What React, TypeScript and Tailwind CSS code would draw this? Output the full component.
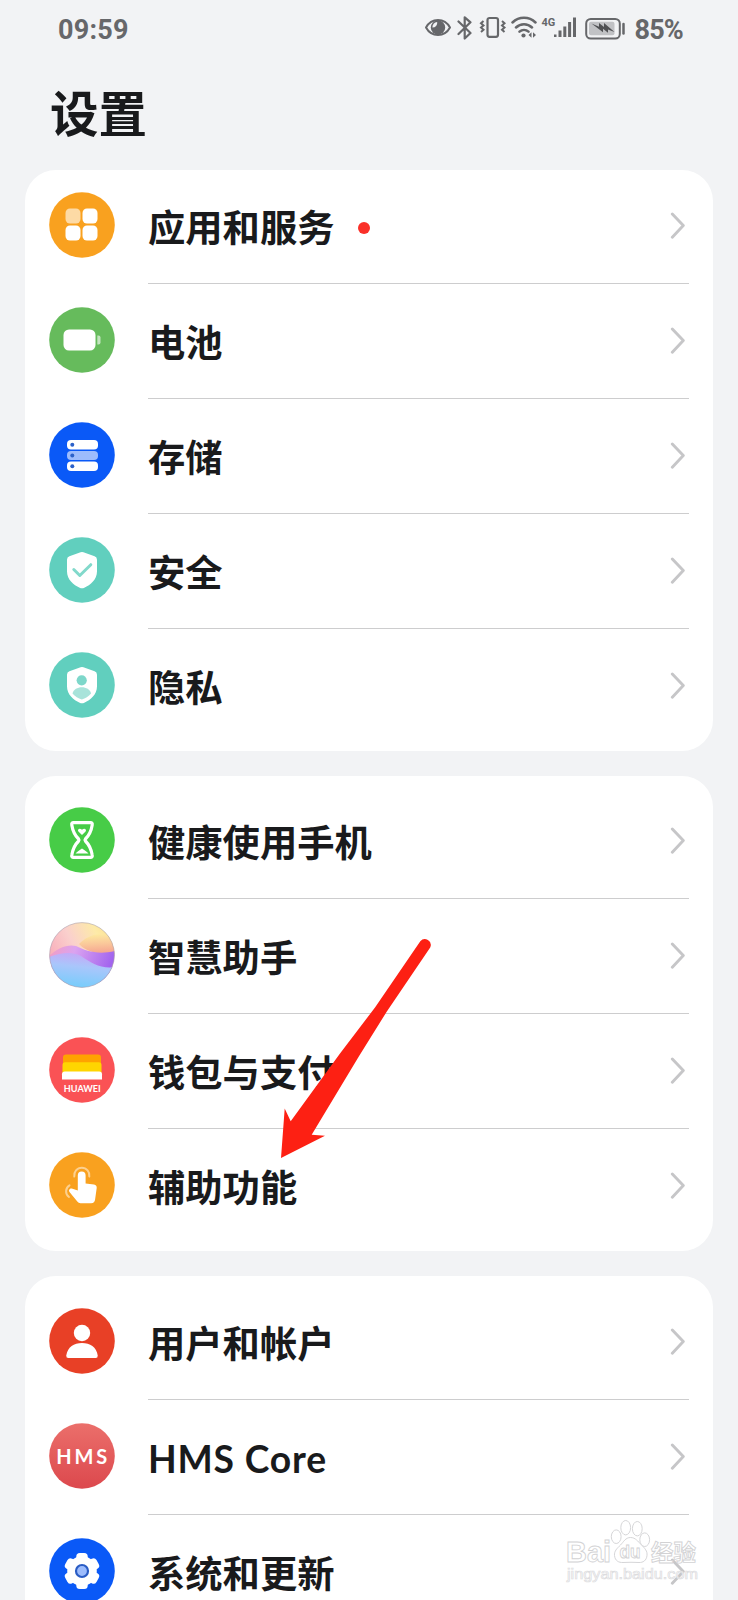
import React from "react";

type Item = {
  label: string;
  icon: React.FC;
  dot?: boolean;
  latin?: boolean;
};

const Badge: React.FC<{ color: string; children: React.ReactNode }> = ({ color, children }) => (
  <svg width="66" height="66" viewBox="0 0 66 66" className="block shrink-0">
    <circle cx="33" cy="33" r="32.8" fill={color} />
    {children}
  </svg>
);

const AppsIcon = () => (
  <Badge color="#f9a11f">
    <rect x="16.5" y="16.5" width="15" height="15" rx="4.5" fill="#fddaa5" />
    <rect x="33.5" y="16.5" width="15" height="15" rx="4.5" fill="#fff" />
    <rect x="16.5" y="33.5" width="15" height="15" rx="4.5" fill="#fff" />
    <rect x="33.5" y="33.5" width="15" height="15" rx="4.5" fill="#fff" />
  </Badge>
);

const BatteryIcon = () => (
  <Badge color="#66bb5c">
    <rect x="14.5" y="22.5" width="32" height="21" rx="5.5" fill="#fff" />
    <path d="M48.3 28.5h1.2q2 0 2 2v5q0 2-2 2h-1.2z" fill="#c2e4be" />
  </Badge>
);

const StorageIcon = () => (
  <Badge color="#0a59f7">
    <rect x="18" y="18" width="31" height="9.5" rx="4" fill="#fff" />
    <rect x="18" y="29" width="31" height="9" rx="4" fill="#9dbcfc" />
    <rect x="18" y="39.5" width="31" height="9.5" rx="4" fill="#fff" />
    <circle cx="23.3" cy="22.8" r="2" fill="#2b61c9" />
    <circle cx="23.3" cy="33.5" r="2" fill="#2b61c9" />
    <circle cx="23.3" cy="44.2" r="2" fill="#2b61c9" />
  </Badge>
);

const SHIELD =
  "M31.6 15.2q1.4-.6 2.8 0l11.2 4.1q2.400.9 2.400 3.400v11.500c0 8.500-6.500 13.500-12.700 16.600q-2.300 1.100-4.600 0C24.500 47.700 18 42.700 18 34.200V22.700q0-2.500 2.400-3.400z";

const SecurityIcon = () => (
  <Badge color="#61cfbe">
    <path d={SHIELD} fill="#fff" />
    <path d="M24.8 32.5l6 6 11-10.8" fill="none" stroke="#82d9cb" strokeWidth="3" strokeLinecap="round" strokeLinejoin="round" />
  </Badge>
);

const PrivacyIcon = () => (
  <Badge color="#61cfbe">
    <path d={SHIELD} fill="#fff" />
    <circle cx="32.7" cy="28.3" r="5.1" fill="#7dd7ca" />
    <path d="M23.5 41.5c1-4.2 5-6.3 9.3-6.3s8.3 2.1 9.3 6.3c-2.5 3-5.8 5-9.3 6-3.500-1-6.800-3-9.300-6z" fill="#a8e3da" />
  </Badge>
);

const HourglassIcon = () => (
  <Badge color="#47cc47">
    <path
      d="M24.5 15.7h17q2.2 0 1.7 2.2c-1 6.5-3.2 10.5-6.8 14.1q-.8 1 0 2c3.6 3.6 5.8 7.6 6.8 14.1q.5 2.2-1.7 2.2h-17q-2.2 0-1.7-2.2c1-6.500 3.200-10.500 6.800-14.100q.8-1 0-2c-3.600-3.600-5.800-7.600-6.800-14.100q-.5-2.200 1.700-2.200z"
      fill="none"
      stroke="#fff"
      strokeWidth="3.2"
    />
    <path d="M33 28l-3.6-3.6c-1.5-1.9 1.2-4.2 3.6-1.6 2.4-2.6 5.1-.3 3.6 1.6z" fill="#fff" />
    <path d="M26.5 46.5c1.500-2 4-3 6.500-5 2.500 2 5 3 6.500 5z" fill="#fff" />
  </Badge>
);

const AssistantIcon = () => (
  <svg width="66" height="66" viewBox="0 0 66 66" className="block shrink-0">
    <defs>
      <clipPath id="orb">
        <circle cx="33" cy="33" r="32.5" />
      </clipPath>
      <linearGradient id="orbSky" x1="0" y1="0.6" x2="1" y2="0.1">
        <stop offset="0" stopColor="#f8a9b8" />
        <stop offset="0.4" stopColor="#fad0cd" />
        <stop offset="0.75" stopColor="#fdeaa8" />
        <stop offset="1" stopColor="#fde08a" />
      </linearGradient>
      <linearGradient id="orbPeach" x1="0.4" y1="0" x2="0.5" y2="1">
        <stop offset="0" stopColor="#fdeaa0" />
        <stop offset="0.5" stopColor="#fac79a" />
        <stop offset="1" stopColor="#f5a18f" />
      </linearGradient>
      <linearGradient id="orbViolet" x1="0" y1="0" x2="1" y2="0.2">
        <stop offset="0" stopColor="#f39dc0" />
        <stop offset="0.4" stopColor="#dba3f0" />
        <stop offset="1" stopColor="#a264ee" />
      </linearGradient>
      <linearGradient id="orbSea" x1="0.6" y1="0" x2="0.4" y2="1">
        <stop offset="0" stopColor="#c9a6f6" />
        <stop offset="0.4" stopColor="#a9c6fb" />
        <stop offset="1" stopColor="#74cdfb" />
      </linearGradient>
    </defs>
    <g clipPath="url(#orb)">
      <rect width="66" height="66" fill="url(#orbSky)" />
      <path d="M30 22C38 14 50 8 66 16v16C50 32 38 31 30 22z" fill="url(#orbPeach)" />
      <path d="M0 34c9-8 18-12 27-10 10 5 22 9 39 5v31H0z" fill="url(#orbViolet)" />
      <path d="M0 35c12-4 22-6 32-1 10 7 20 13 34 11v21H0z" fill="url(#orbSea)" />
    </g>
    <circle cx="33" cy="33" r="32.4" fill="none" stroke="#a79fb0" strokeWidth="0.8" opacity="0.7" />
  </svg>
);

const WalletIcon = () => (
  <Badge color="#fa5255">
    <path d="M17 17.5h32q3 0 3 3V38H14V20.5q0-3 3-3z" fill="#ffa200" />
    <path d="M13.5 28q0-2.7 2.7-2.7h33.6q2.7 0 2.7 2.7v10h-39z" fill="#ffd500" />
    <path d="M13 42.5v-5.2q0-2.8 2.8-2.8h34.4q2.8 0 2.8 2.8v5.2z" fill="#fff" />
    <text x="14.8" y="54.5" textLength="37" lengthAdjust="spacingAndGlyphs" fontSize="8.6" fontWeight="700" fill="#fff" fontFamily="Lato, sans-serif">
      HUAWEI
    </text>
  </Badge>
);

const TouchIcon = () => (
  <Badge color="#f9a11f">
    <path d="M25.3 24.5a7.6 7.6 0 1 1 15 0" fill="none" stroke="#fcd08f" strokeWidth="2" strokeLinecap="round" />
    <path d="M20.5 33.3a7 7 0 0 0-.5 11.7" fill="none" stroke="#fcd08f" strokeWidth="2" strokeLinecap="round" />
    <path
      d="M28.8 38.5V23.5a3.9 3.9 0 0 1 7.8 0v8l8.4 1.1q3 .5 2.7 3.5l-1.6 11.5q-.4 3.6-4 3.6H31.5q-2 0-3.2-1.6l-7.6-9.3c-1.8-2.3.5-4.5 2.8-3.5z"
      fill="#fff"
    />
  </Badge>
);

const UserIcon = () => (
  <Badge color="#e84026">
    <circle cx="33" cy="25" r="8.2" fill="#fff" />
    <path d="M17.3 47.5C18.5 39 25 35 33 35s14.5 4 15.7 12.5q.2 2.5-2 2.5H19.3q-2.2 0-2-2.5z" fill="#fff" />
  </Badge>
);

const HmsIcon = () => (
  <Badge color="url(#hms)">
    <defs>
      <linearGradient id="hms" x1="0" y1="0" x2="0" y2="1">
        <stop offset="0" stopColor="#eb6f6b" />
        <stop offset="1" stopColor="#dc484d" />
      </linearGradient>
    </defs>
    <text x="7.2" y="40.5" textLength="51" fontSize="20" fontWeight="700" fill="#fff" fontFamily="Lato, sans-serif">
      HMS
    </text>
  </Badge>
);

const GearIcon = () => (
  <Badge color="#0a59f7">
    <g fill="#fff">
      <circle cx="33" cy="33" r="14.8" />
      {[0, 60, 120].map((angle) => (
        <rect key={angle} x="27.3" y="15" width="11.4" height="36" rx="3.5" transform={`rotate(${angle} 33 33)`} />
      ))}
    </g>
    <circle cx="33" cy="33" r="6" fill="#9dbcfc" stroke="#2a5cc4" strokeWidth="2.2" />
  </Badge>
);

const Chevron = () => (
  <svg width="16" height="28" viewBox="0 0 16 28" className="block shrink-0">
    <path d="M2.3 2L13.3 13.6 2.3 25.2" fill="none" stroke="#c6c6c8" strokeWidth="2.9" strokeLinecap="round" strokeLinejoin="round" />
  </svg>
);

const deviceItems: Item[] = [
  { label: "应用和服务", icon: AppsIcon, dot: true },
  { label: "电池", icon: BatteryIcon },
  { label: "存储", icon: StorageIcon },
  { label: "安全", icon: SecurityIcon },
  { label: "隐私", icon: PrivacyIcon },
];

const featureItems: Item[] = [
  { label: "健康使用手机", icon: HourglassIcon },
  { label: "智慧助手", icon: AssistantIcon },
  { label: "钱包与支付", icon: WalletIcon },
  { label: "辅助功能", icon: TouchIcon },
];

const systemItems: Item[] = [
  { label: "用户和帐户", icon: UserIcon },
  { label: "HMS Core", icon: HmsIcon, latin: true },
  { label: "系统和更新", icon: GearIcon },
];

const SettingsCard: React.FC<{ items: Item[]; className: string }> = ({ items, className }) => (
  <section className={`mx-[25px] rounded-[31px] bg-white ${className}`}>
    {items.map(({ label, icon: Icon, dot, latin }, i) => (
      <div key={label} className="flex h-[115px] px-6">
        <div className="flex h-[112px] items-center">
          <Icon />
        </div>
        <div
          className={`ml-[33px] flex flex-1 items-center border-b pr-[3px] ${
            i < items.length - 1 ? "border-[#cdcdce]" : "border-transparent"
          }`}
        >
          <span
            className={`mt-[3px] whitespace-nowrap text-[37.3px] font-bold leading-none text-[#191a1c] ${
              latin ? "tracking-[0.8px]" : ""
            }`}
          >
            {label}
          </span>
          {dot && <span className="ml-[24px] mt-[3px] h-[12px] w-[12px] rounded-full bg-[#fa3029]" />}
          <span className="ml-auto">
            <Chevron />
          </span>
        </div>
      </div>
    ))}
  </section>
);

const StatusBar = () => (
  <header className="flex h-[57px] shrink-0 items-start pl-[58px] pr-[55px] pt-4 font-[Roboto,sans-serif] text-[27px] font-bold leading-[29px] text-[#66676a]">
    <span className="tracking-[0.2px]">09:59</span>
    <div className="ml-auto flex">
      {/* eye comfort */}
      <svg width="28" height="24" viewBox="0 0 28 24">
        <path d="M2 11.5C7.5 1.5 20.5 1.5 26 11.5 20.5 21.5 7.5 21.5 2 11.5z" fill="none" stroke="currentColor" strokeWidth="2" strokeLinejoin="round" />
        <circle cx="14" cy="11.5" r="7.2" fill="currentColor" />
        <path d="M13.2 6a4.800 4.800 0 0 1-4.800 5.600C8.300 8.500 10.200 6.300 13.200 6z" fill="#f2f3f5" />
      </svg>
      {/* bluetooth */}
      <svg width="16" height="24" viewBox="0 0 16 24" className="ml-[5px]">
        <path d="M1.500 5.500l12 11.500-5.800 5.500V1.300l5.800 5L1.500 18" fill="none" stroke="currentColor" strokeWidth="2.200" strokeLinejoin="round" strokeLinecap="round" />
      </svg>
      {/* vibrate */}
      <svg width="28" height="24" viewBox="0 0 28 24" className="ml-[6px]">
        <rect x="8.5" y="2" width="10.5" height="18.8" rx="2" fill="none" stroke="currentColor" strokeWidth="2.2" />
        <path d="M4.5 5L2 7.200l2.500 2.200L2 11.600l2.500 2.200L2 16M23 5l2.500 2.200L23 9.400l2.500 2.200-2.500 2.200 2.500 2.200" fill="none" stroke="currentColor" strokeWidth="2" />
      </svg>
      {/* wifi */}
      <svg width="26" height="24" viewBox="0 0 26 24" className="ml-[4px]">
        <path d="M1.500 6.500c6.500-6.200 16.500-6.200 23 0M5 11.500c4.500-4.300 11.500-4.300 16 0M8.500 15.700c2.600-2.400 6.400-2.400 9 0" fill="none" stroke="currentColor" strokeWidth="2.500" strokeLinecap="round" />
        <circle cx="12.5" cy="19.5" r="2.1" fill="currentColor" />
        <path d="M20.500 16.300v5.400L17.500 19zM22 16.300v5.400l3-2.700z" fill="currentColor" />
      </svg>
      <span className="ml-[4px] w-[13px] whitespace-nowrap text-[11px] font-bold leading-[13px]">4G</span>
      {/* signal */}
      <svg width="24" height="24" viewBox="0 0 24 24" className="-ml-px">
        <path d="M1 18.500h2.500V21H1zM5.500 14.500h3V21h-3zM10.300 10.500h3V21h-3zM15.100 6h3v15h-3zM20 1.500h3V21h-3z" fill="currentColor" />
      </svg>
      {/* battery */}
      <svg width="42" height="24" viewBox="0 0 42 24" className="ml-[8px]">
        <rect x="1.2" y="3" width="33.6" height="19.5" rx="4.5" fill="none" stroke="currentColor" strokeWidth="2" />
        <rect x="4" y="5.8" width="25.5" height="13.5" rx="2" fill="#c1c2c5" />
        <path d="M6.500 7.500l7.500 3.300V7l5 4V7l10.500 9-6.500-2.600v3.400l-5-4v3.400z" fill="#4f5053" />
        <path d="M38.500 8v9.500" stroke="currentColor" strokeWidth="2.500" strokeLinecap="round" />
      </svg>
      <span className="ml-[7px] tracking-[-0.8px]">85%</span>
    </div>
  </header>
);

const Arrow = () => (
  <svg width="160" height="230" viewBox="275 935 160 230" className="pointer-events-none absolute left-[275px] top-[935px]">
    <path
      d="M281 1158L284.700 1108.500 290.700 1121.300 340 1053.500 375 1007.500 420.300 941.300A5.900 5.900 0 0 1 430.200 947.500L386.500 1012 358.500 1057 311.700 1134.700 325 1135.700z"
      fill="#fd2013"
    />
  </svg>
);

const Watermark = () => (
  <svg width="140" height="70" viewBox="0 0 140 70" className="pointer-events-none absolute left-[562px] top-[1515px]">
    <g fill="#fff" fillOpacity="0.75" stroke="#d6d6d8" strokeWidth="1">
      <ellipse cx="54.2" cy="21.7" rx="4.9" ry="6.8" />
      <ellipse cx="63.7" cy="12.7" rx="4.9" ry="7.2" />
      <ellipse cx="75.3" cy="13.7" rx="4.9" ry="7.2" />
      <ellipse cx="82.7" cy="24.7" rx="4.9" ry="6.8" />
      <path d="M68.500 22.500c5 0 7.500 4 10.500 7 4 4 6.500 6.500 6 11-.5 5-4 7.200-8 7-5-.3-11-.3-16 0-4 .2-8-1.500-8.500-7-.4-4.500 2.500-7 6-10.500 3-3 5-7.500 10-7.500z" />
    </g>
    <g fill="#fff" fillOpacity="0.8" stroke="#d2d2d4" strokeWidth="0.9" fontFamily="'Liberation Sans', 'Noto Sans CJK SC', sans-serif" fontWeight="700">
      <text x="4" y="46.5" fontSize="30" textLength="45" lengthAdjust="spacingAndGlyphs">Bai</text>
      <text x="57.5" y="43" fontSize="19" textLength="21" lengthAdjust="spacingAndGlyphs">du</text>
      <text x="89" y="46" fontSize="23" textLength="45" lengthAdjust="spacingAndGlyphs">经验</text>
      <text x="5" y="64" fontSize="15" fontWeight="400" stroke="#dcdcde" strokeWidth="0.7" textLength="131" lengthAdjust="spacingAndGlyphs">jingyan.baidu.com</text>
    </g>
  </svg>
);

const App: React.FC = () => (
  <div className="relative flex h-[1600px] w-[738px] flex-col overflow-hidden bg-[#f2f3f5] font-['Lato','Noto_Sans_CJK_SC',sans-serif]">
    <StatusBar />
    <h1 className="h-[113px] shrink-0 pl-[50px] pt-8 text-[48.5px] font-bold leading-[48px] text-[#191a1c]">设置</h1>
    <main className="flex flex-col gap-[25px]">
      <SettingsCard items={deviceItems} className="h-[581px] [&>div:first-child]:-mt-px" />
      <SettingsCard items={featureItems} className="h-[475px] pt-2" />
      <SettingsCard items={systemItems} className="h-[475px] pt-[9px]" />
    </main>
    <Arrow />
    <Watermark />
  </div>
);

export default App;
